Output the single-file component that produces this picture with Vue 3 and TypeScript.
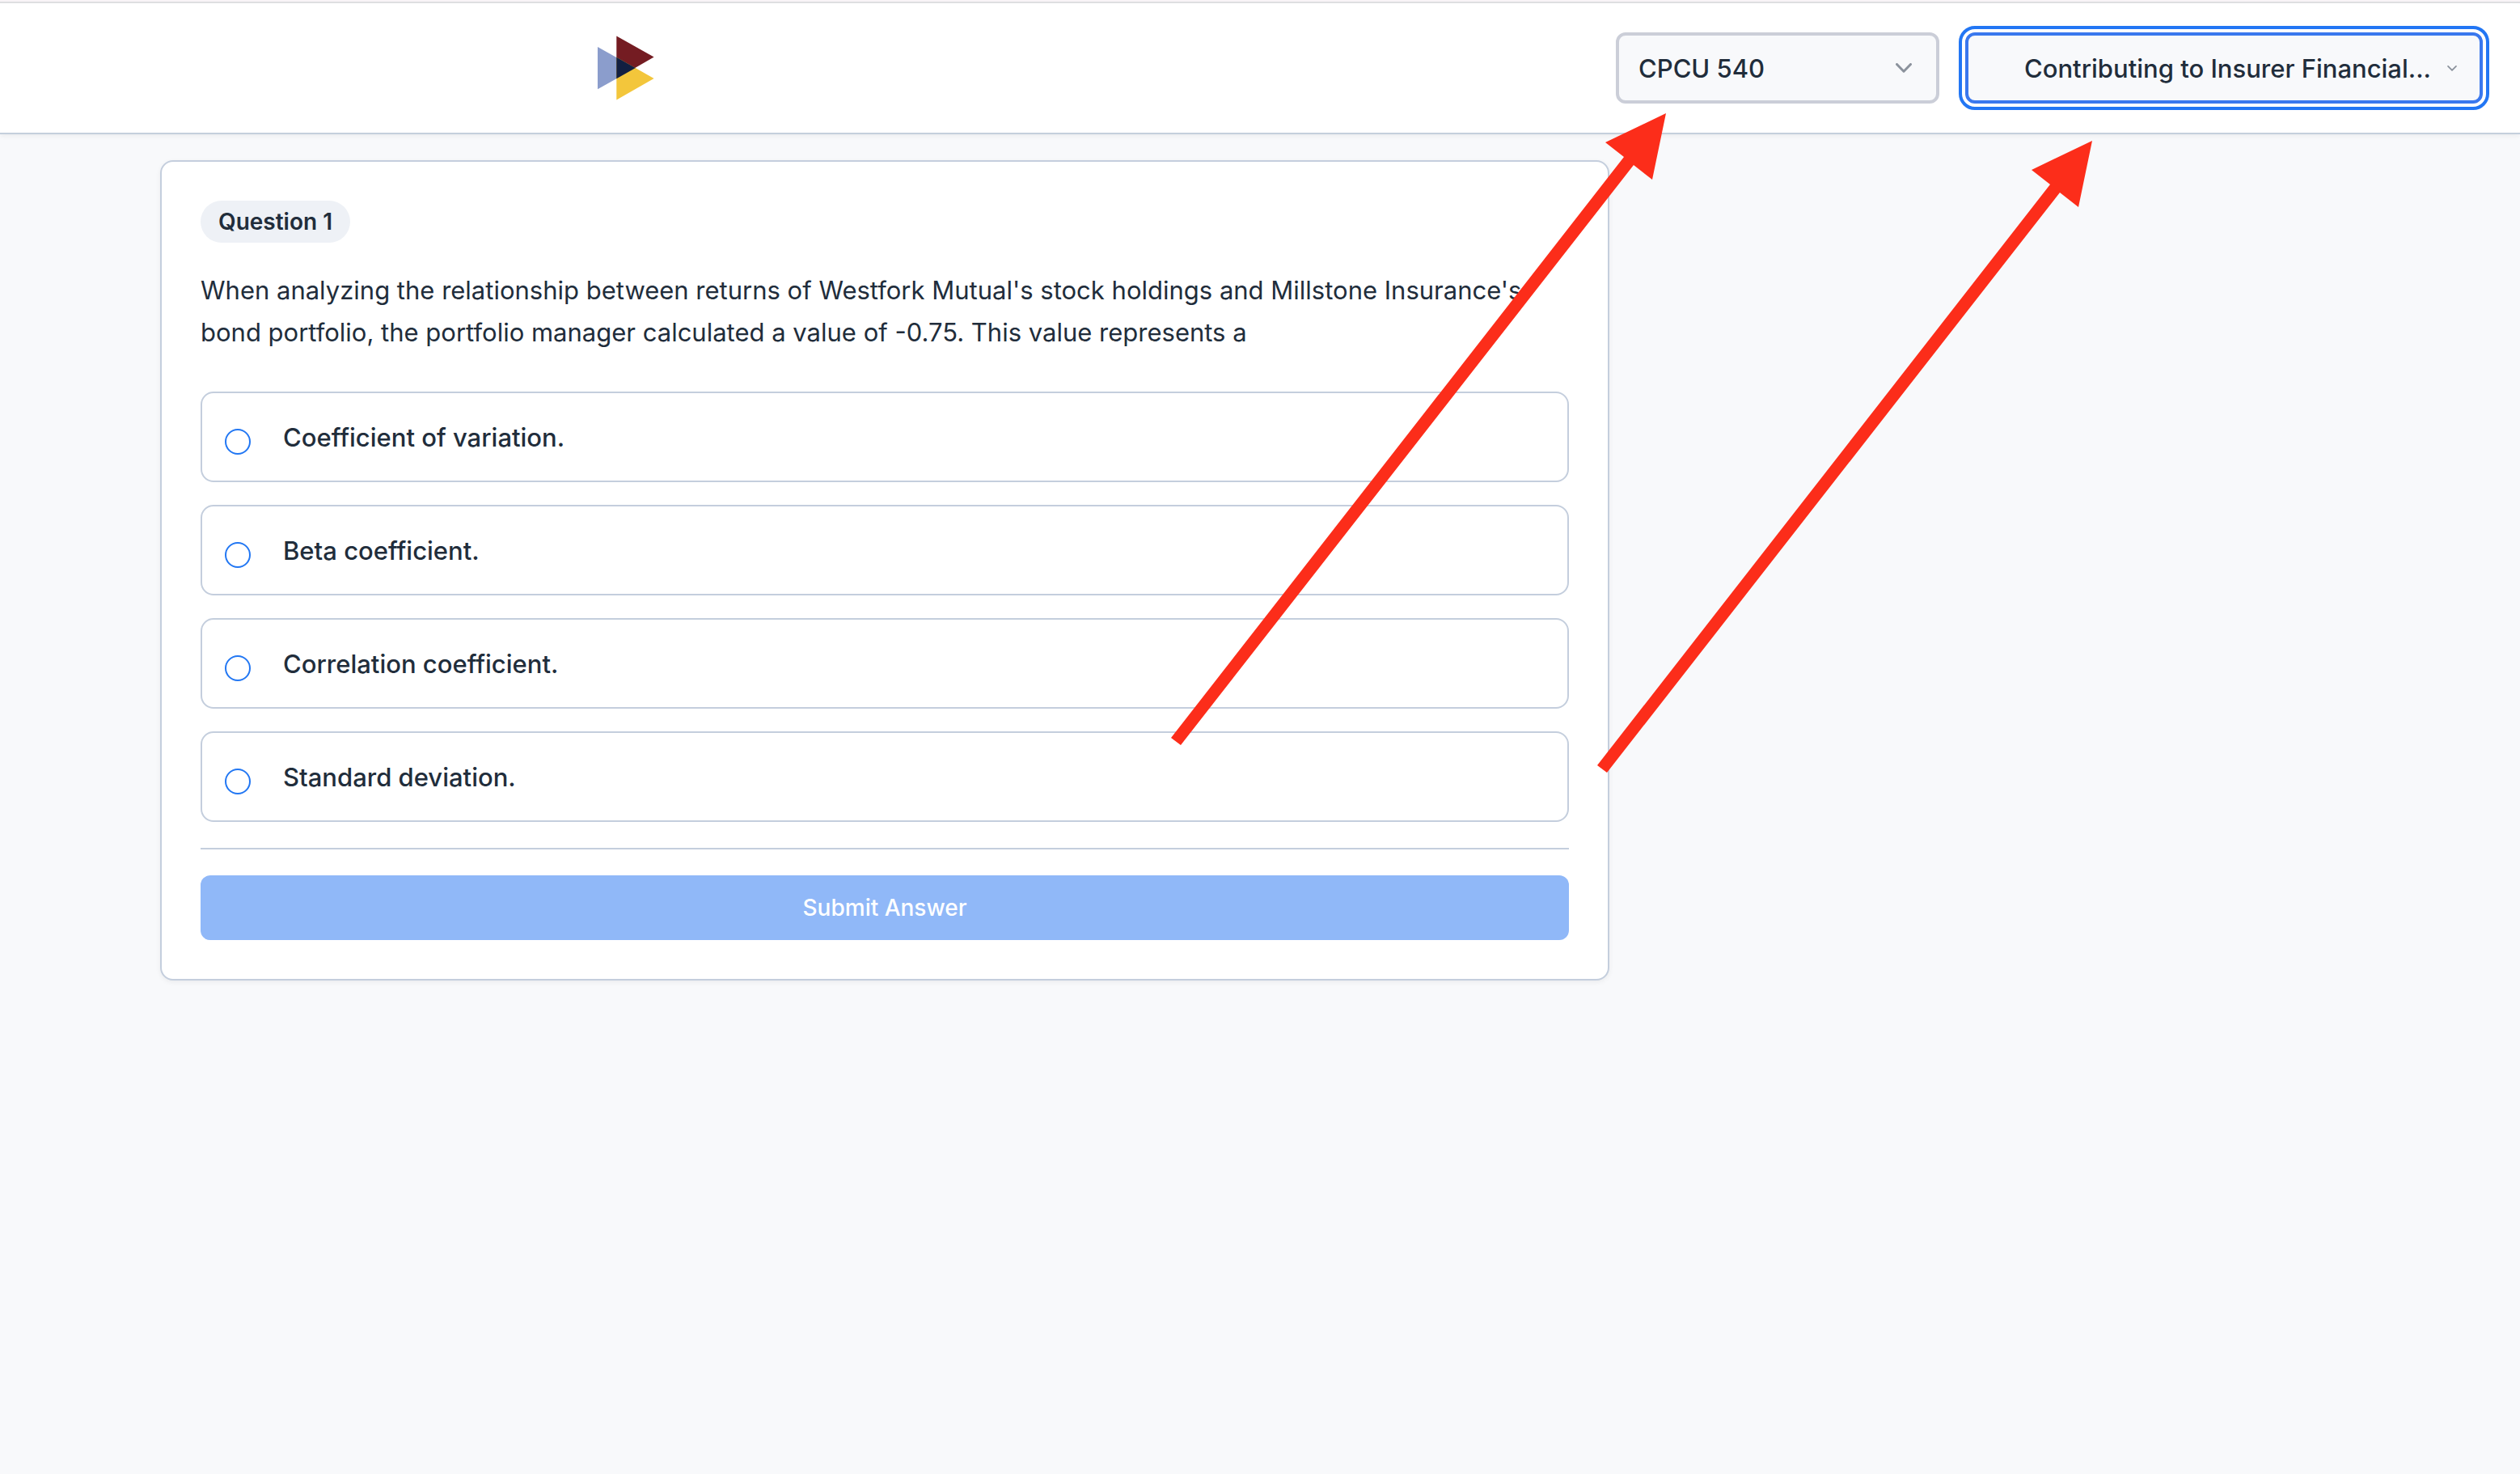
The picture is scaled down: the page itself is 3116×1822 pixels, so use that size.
<script setup lang="ts">
import { ref } from 'vue'

interface Choice {
  id: string
  label: string
}

const course = ref('CPCU 540')
const chapter = ref('Contributing to Insurer Financial...')
const selected = ref<string | null>(null)

const choices: Choice[] = [
  { id: 'a', label: 'Coefficient of variation.' },
  { id: 'b', label: 'Beta coefficient.' },
  { id: 'c', label: 'Correlation coefficient.' },
  { id: 'd', label: 'Standard deviation.' },
]

const arrows: string[] = [
  '2060,140 1985,176 2008,194 1448,912 1460,921 2020,204 2043,222',
  '2587,174 2512,210 2535,228 1975,946 1987,955 2547,238 2570,256',
]
</script>

<template>
  <div class="page">
    <header class="topbar">
      <svg class="logo" viewBox="0 0 70 80" aria-label="Home" role="img">
        <polygon points="0,14 46.6,40 0,66.3" fill="#8b9dcc" />
        <polygon points="23.3,0.6 69.6,26.6 23.3,53.2" fill="#741c22" />
        <polygon points="23.3,26.8 69.6,53 23.3,79.4" fill="#f3c63b" />
        <polygon points="23.3,26.8 46.8,40 23.3,53.2" fill="#121f41" />
      </svg>

      <div class="pickers">
        <div class="picker course">
          <select v-model="course" aria-label="Course">
            <option>CPCU 540</option>
          </select>
          <svg class="chevron" viewBox="0 0 20 12" aria-hidden="true">
            <path d="M1.5 1.5 10 10.2 18.5 1.5" />
          </svg>
        </div>
        <div class="picker chapter focused">
          <select v-model="chapter" aria-label="Chapter">
            <option>Contributing to Insurer Financial...</option>
          </select>
          <svg class="chevron" viewBox="0 0 20 12" aria-hidden="true">
            <path d="M1.5 1.5 10 10.2 18.5 1.5" />
          </svg>
        </div>
      </div>
    </header>

    <main class="content">
      <form class="card" @submit.prevent>
        <span class="badge">Question 1</span>
        <p id="prompt" class="prompt">
          When analyzing the relationship between returns of Westfork Mutual's stock holdings and
          Millstone Insurance's<br />
          bond portfolio, the portfolio manager calculated a value of -0.75. This value represents a
        </p>
        <div class="choices" role="radiogroup" aria-labelledby="prompt">
          <label v-for="choice in choices" :key="choice.id" class="choice">
            <input v-model="selected" type="radio" name="answer" :value="choice.id" />
            <span>{{ choice.label }}</span>
          </label>
        </div>
        <div class="actions">
          <button type="submit" class="submit" :disabled="!selected">Submit Answer</button>
        </div>
      </form>
    </main>

    <svg class="arrows" width="2600" height="960" viewBox="0 0 2600 960" aria-hidden="true">
      <polygon v-for="points in arrows" :key="points" :points="points" fill="#fc2d1a" />
    </svg>
  </div>
</template>

<style>
body {
  margin: 0;
  background: #f8f9fb;
}
</style>

<style scoped>
.page,
.page * {
  box-sizing: border-box;
}

.page {
  position: relative;
  min-height: 100vh;
  overflow: hidden;
  background: #f8f9fb;
  color: #212d3b;
  font-family: Inter, 'Liberation Sans', sans-serif;
  font-size: 31px;
}

.topbar {
  display: flex;
  align-items: center;
  justify-content: space-between;
  padding: 36px 46px 36px 739px;
  border-top: 4px solid #dedfe1;
  border-bottom: 2px solid #c4cfdc;
  background: #fff;
  box-shadow: 0 2px 6px rgba(0, 0, 0, 0.06);
}

.topbar::before {
  content: '';
  position: absolute;
  top: 0;
  left: 0;
  width: 100%;
  height: 2px;
  background: #f9f4f7;
}

.logo {
  width: 70px;
  height: 80px;
}

.pickers {
  display: flex;
  gap: 32px;
}

.picker {
  position: relative;
  height: 88px;
}

.picker.course {
  width: 400px;
}

.picker.chapter {
  width: 640px;
}

.picker select {
  width: 100%;
  height: 100%;
  padding: 0 24px;
  border: 4px solid #cbced8;
  border-radius: 12px;
  background: #f8f9fb;
  color: inherit;
  font: inherit;
  font-weight: 500;
  appearance: none;
}

.picker.chapter select {
  padding: 0 48px 0 69px;
}

.picker.focused select {
  border-color: #3a78ee;
  outline: 4px solid #2276f4;
  outline-offset: 4px;
}

.chevron {
  position: absolute;
  top: 38px;
  right: 34px;
  width: 20px;
  height: 12px;
  fill: none;
  stroke: #8b929c;
  stroke-width: 3;
  stroke-linecap: round;
  stroke-linejoin: round;
  pointer-events: none;
}

.chapter .chevron {
  top: 41px;
  right: 32px;
  width: 12px;
  height: 7px;
}

.content {
  max-width: 2720px;
  margin: 0 auto;
  padding: 32px 0;
}

.card {
  max-width: 1792px;
  padding: 48px;
  border: 2px solid #c4cedd;
  border-radius: 16px;
  background: #fff;
  box-shadow: 0 2px 6px rgba(0, 0, 0, 0.06);
}

.badge {
  display: block;
  width: fit-content;
  padding: 0 22px;
  border-radius: 26px;
  background: #eef1f6;
  font-size: 28px;
  font-weight: 600;
  line-height: 52px;
}

.prompt {
  margin: 33px 0 47px;
  line-height: 52px;
}

.choices {
  display: grid;
  gap: 28px;
}

.choice {
  display: flex;
  align-items: flex-start;
  gap: 40px;
  height: 112px;
  padding: 29px 28px;
  border: 2px solid #c4cedd;
  border-radius: 16px;
  font-weight: 500;
  line-height: 52px;
}

.choice input {
  flex: none;
  width: 32px;
  height: 32px;
  margin: 15px 0 0;
  border: 2px solid #2277f3;
  border-radius: 50%;
  background: #fff;
  appearance: none;
}

.choice input:checked {
  border-width: 10px;
}

.actions {
  margin-top: 32px;
  padding-top: 32px;
  border-top: 2px solid #c4cedd;
}

.submit {
  display: block;
  width: 100%;
  height: 80px;
  padding: 0;
  border: 0;
  border-radius: 12px;
  background: #2277f3;
  color: #fff;
  font: inherit;
  font-size: 28px;
  font-weight: 500;
}

.submit:disabled {
  background: #90b8f8;
}

.arrows {
  position: absolute;
  top: 0;
  left: 0;
  pointer-events: none;
}
</style>
